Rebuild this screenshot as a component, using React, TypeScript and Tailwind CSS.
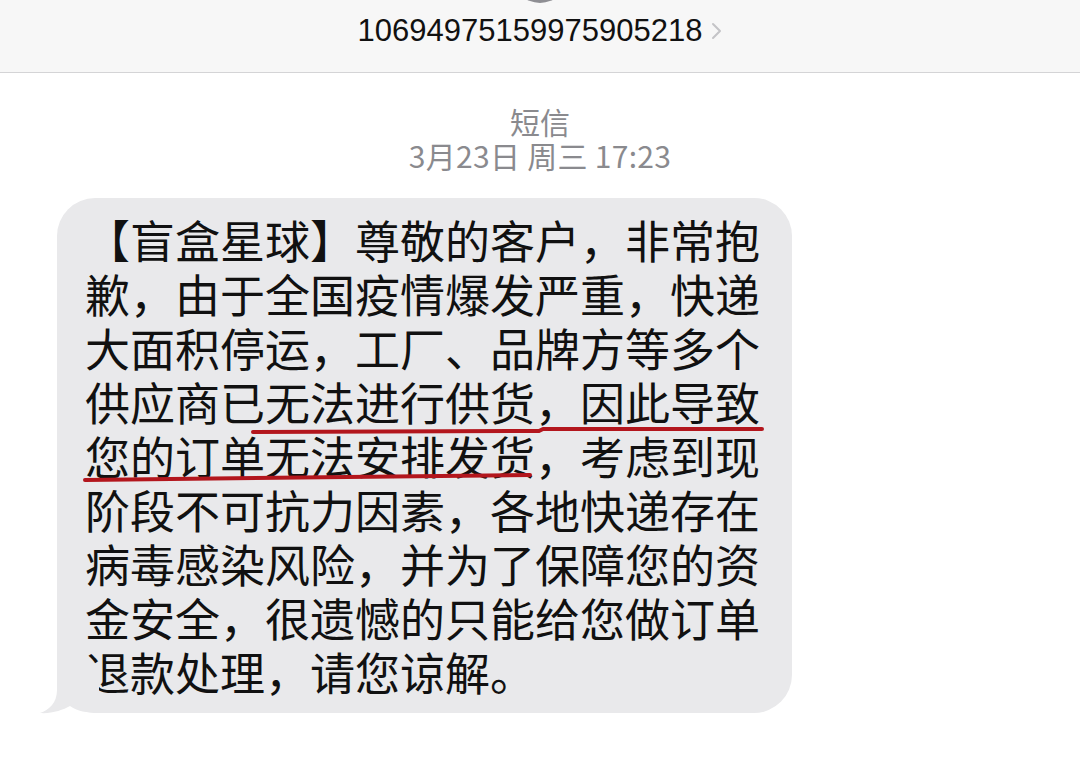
const LINES = [
  "【盲盒星球】尊敬的客户，非常抱",
  "歉，由于全国疫情爆发严重，快递",
  "大面积停运，工厂、品牌方等多个",
  "供应商已无法进行供货，因此导致",
  "您的订单无法安排发货，考虑到现",
  "阶段不可抗力因素，各地快递存在",
  "病毒感染风险，并为了保障您的资",
  "金安全，很遗憾的只能给您做订单",
  "退款处理，请您谅解。",
];

const CJK = { fontFamily: '"Noto Sans CJK SC", "Noto Sans", sans-serif' };

export default function App() {
  return (
    <div className="w-[1080px] h-[784px] bg-white overflow-hidden" style={CJK}>
      {/* header */}
      <header className="relative h-[73px] bg-[#f7f7f7] border-b border-[#d4d4d6] flex justify-center items-start pt-[12px]">
        <div className="absolute left-1/2 -translate-x-1/2 top-[-53px] w-[56px] h-[56px] rounded-full bg-[#8e8e93]" />
        <div className="flex items-center gap-[9px]">
          <span
            className="text-[31px] leading-[38px] text-[#111]"
            style={{ fontFamily: '"Liberation Sans", Arial, sans-serif' }}
          >
            10694975159975905218
          </span>
          <svg width="11" height="18" viewBox="0 0 11 18" fill="none">
            <path d="M2 2 L9 9 L2 16" stroke="#c4c4c7" strokeWidth="2" strokeLinecap="round" strokeLinejoin="round" />
          </svg>
        </div>
      </header>

      {/* timestamp */}
      <div className="mt-[31px] flex flex-col items-center text-[30px] leading-[34px] text-[#8a8a8e]">
        <span>短信</span>
        <span className="tracking-[0.3px]">3月23日 周三 17:23</span>
      </div>

      {/* bubble */}
      <div className="mt-[26px] ml-[57px] relative w-[735px]">
        <div className="bg-[#e9e9eb] rounded-[38px] pl-[28px] pr-[32px] pt-[15px] pb-[14px] text-[45px] leading-[54px] text-[#111]">
          {LINES.map((line, i) => (
            <div key={i} className="whitespace-nowrap">
              {line}
            </div>
          ))}
        </div>
        <svg
          className="absolute left-0 top-0 overflow-visible pointer-events-none"
          width="735"
          height="515"
          viewBox="0 0 735 515"
        >
          {/* tail */}
          <path
            d="M0 470 L0 492 C0 505 -8 512 -17 515 C-6 516 6 512 13 508 C20 513 30 515 42 515 L42 470 Z"
            fill="#e9e9eb"
          />
          {/* hand-drawn underlines */}
          <path
            d="M196 234 L482 233 L486 231 L705 231"
            stroke="#b3161d"
            strokeWidth="4"
            fill="none"
            strokeLinecap="round"
            strokeLinejoin="round"
          />
          <path
            d="M28 282 L473 277"
            stroke="#b3161d"
            strokeWidth="4"
            fill="none"
            strokeLinecap="round"
          />
        </svg>
      </div>
    </div>
  );
}
